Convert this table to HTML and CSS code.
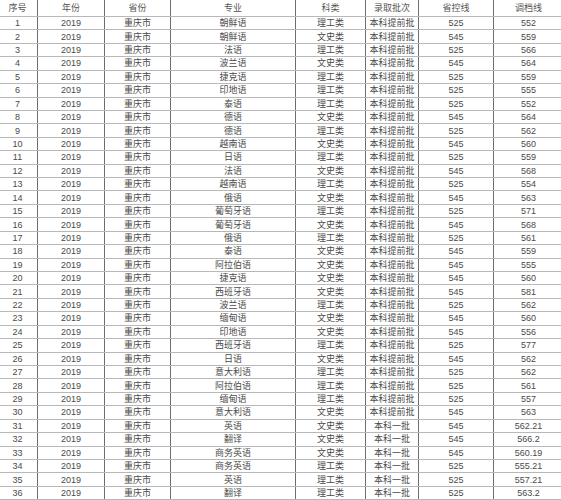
FILE: index.html
```html
<!DOCTYPE html>
<html lang="zh">
<head>
<meta charset="utf-8">
<link rel="stylesheet" href="styles.css">
</head>
<body>
<div class="frame">
<table class="grid">
<colgroup>
<col class="c1"><col class="c2"><col class="c3"><col class="c4"><col class="c5"><col class="c6"><col class="c7"><col class="c8">
</colgroup>
<thead>
<tr class="head"><th>序号</th><th>年份</th><th>省份</th><th>专业</th><th>科类</th><th>录取批次</th><th>省控线</th><th>调档线</th></tr>
</thead>
<tbody>
<tr><td>1</td><td>2019</td><td>重庆市</td><td>朝鲜语</td><td>理工类</td><td>本科提前批</td><td>525</td><td>552</td></tr>
<tr><td>2</td><td>2019</td><td>重庆市</td><td>朝鲜语</td><td>文史类</td><td>本科提前批</td><td>545</td><td>559</td></tr>
<tr><td>3</td><td>2019</td><td>重庆市</td><td>法语</td><td>理工类</td><td>本科提前批</td><td>525</td><td>566</td></tr>
<tr><td>4</td><td>2019</td><td>重庆市</td><td>波兰语</td><td>文史类</td><td>本科提前批</td><td>545</td><td>564</td></tr>
<tr><td>5</td><td>2019</td><td>重庆市</td><td>捷克语</td><td>理工类</td><td>本科提前批</td><td>525</td><td>559</td></tr>
<tr><td>6</td><td>2019</td><td>重庆市</td><td>印地语</td><td>理工类</td><td>本科提前批</td><td>525</td><td>555</td></tr>
<tr><td>7</td><td>2019</td><td>重庆市</td><td>泰语</td><td>理工类</td><td>本科提前批</td><td>525</td><td>552</td></tr>
<tr><td>8</td><td>2019</td><td>重庆市</td><td>德语</td><td>文史类</td><td>本科提前批</td><td>545</td><td>564</td></tr>
<tr><td>9</td><td>2019</td><td>重庆市</td><td>德语</td><td>理工类</td><td>本科提前批</td><td>525</td><td>562</td></tr>
<tr><td>10</td><td>2019</td><td>重庆市</td><td>越南语</td><td>文史类</td><td>本科提前批</td><td>545</td><td>560</td></tr>
<tr><td>11</td><td>2019</td><td>重庆市</td><td>日语</td><td>理工类</td><td>本科提前批</td><td>525</td><td>559</td></tr>
<tr><td>12</td><td>2019</td><td>重庆市</td><td>法语</td><td>文史类</td><td>本科提前批</td><td>545</td><td>568</td></tr>
<tr><td>13</td><td>2019</td><td>重庆市</td><td>越南语</td><td>理工类</td><td>本科提前批</td><td>525</td><td>554</td></tr>
<tr><td>14</td><td>2019</td><td>重庆市</td><td>俄语</td><td>文史类</td><td>本科提前批</td><td>545</td><td>563</td></tr>
<tr><td>15</td><td>2019</td><td>重庆市</td><td>葡萄牙语</td><td>理工类</td><td>本科提前批</td><td>525</td><td>571</td></tr>
<tr><td>16</td><td>2019</td><td>重庆市</td><td>葡萄牙语</td><td>文史类</td><td>本科提前批</td><td>545</td><td>568</td></tr>
<tr><td>17</td><td>2019</td><td>重庆市</td><td>俄语</td><td>理工类</td><td>本科提前批</td><td>525</td><td>561</td></tr>
<tr><td>18</td><td>2019</td><td>重庆市</td><td>泰语</td><td>文史类</td><td>本科提前批</td><td>545</td><td>559</td></tr>
<tr><td>19</td><td>2019</td><td>重庆市</td><td>阿拉伯语</td><td>文史类</td><td>本科提前批</td><td>545</td><td>555</td></tr>
<tr><td>20</td><td>2019</td><td>重庆市</td><td>捷克语</td><td>文史类</td><td>本科提前批</td><td>545</td><td>560</td></tr>
<tr><td>21</td><td>2019</td><td>重庆市</td><td>西班牙语</td><td>文史类</td><td>本科提前批</td><td>545</td><td>581</td></tr>
<tr><td>22</td><td>2019</td><td>重庆市</td><td>波兰语</td><td>理工类</td><td>本科提前批</td><td>525</td><td>562</td></tr>
<tr><td>23</td><td>2019</td><td>重庆市</td><td>缅甸语</td><td>文史类</td><td>本科提前批</td><td>545</td><td>560</td></tr>
<tr><td>24</td><td>2019</td><td>重庆市</td><td>印地语</td><td>文史类</td><td>本科提前批</td><td>545</td><td>556</td></tr>
<tr><td>25</td><td>2019</td><td>重庆市</td><td>西班牙语</td><td>理工类</td><td>本科提前批</td><td>525</td><td>577</td></tr>
<tr><td>26</td><td>2019</td><td>重庆市</td><td>日语</td><td>文史类</td><td>本科提前批</td><td>545</td><td>562</td></tr>
<tr><td>27</td><td>2019</td><td>重庆市</td><td>意大利语</td><td>理工类</td><td>本科提前批</td><td>525</td><td>562</td></tr>
<tr><td>28</td><td>2019</td><td>重庆市</td><td>阿拉伯语</td><td>理工类</td><td>本科提前批</td><td>525</td><td>561</td></tr>
<tr><td>29</td><td>2019</td><td>重庆市</td><td>缅甸语</td><td>理工类</td><td>本科提前批</td><td>525</td><td>557</td></tr>
<tr><td>30</td><td>2019</td><td>重庆市</td><td>意大利语</td><td>文史类</td><td>本科提前批</td><td>545</td><td>563</td></tr>
<tr><td>31</td><td>2019</td><td>重庆市</td><td>英语</td><td>文史类</td><td>本科一批</td><td>545</td><td>562.21</td></tr>
<tr><td>32</td><td>2019</td><td>重庆市</td><td>翻译</td><td>文史类</td><td>本科一批</td><td>545</td><td>566.2</td></tr>
<tr><td>33</td><td>2019</td><td>重庆市</td><td>商务英语</td><td>文史类</td><td>本科一批</td><td>545</td><td>560.19</td></tr>
<tr><td>34</td><td>2019</td><td>重庆市</td><td>商务英语</td><td>理工类</td><td>本科一批</td><td>525</td><td>555.21</td></tr>
<tr><td>35</td><td>2019</td><td>重庆市</td><td>英语</td><td>理工类</td><td>本科一批</td><td>525</td><td>557.21</td></tr>
<tr><td>36</td><td>2019</td><td>重庆市</td><td>翻译</td><td>理工类</td><td>本科一批</td><td>525</td><td>563.2</td></tr>
<tr><td></td><td></td><td></td><td></td><td></td><td></td><td></td><td></td></tr>
</tbody>
</table>
</div>
</body>
</html>
```

FILE: styles.css
```css
html, body {
  margin: 0;
  padding: 0;
  background: #ffffff;
}

.frame {
  width: 561px;
  height: 500px;
  overflow: hidden;
}

.grid {
  margin-left: -3px;
  margin-top: -1px;
  width: 566px;
  table-layout: fixed;
  border-collapse: collapse;
  font-family: "Liberation Sans", "Noto Sans CJK SC", sans-serif;
  font-size: 9px;
  color: #4a4a4a;
}

.c1 { width: 40px; }
.c2 { width: 67px; }
.c3 { width: 66px; }
.c4 { width: 125px; }
.c5 { width: 70px; }
.c6 { width: 53px; }
.c7 { width: 75px; }
.c8 { width: 70px; }

.grid th,
.grid td {
  padding: 0;
  text-align: center;
  vertical-align: middle;
  line-height: 10px;
  white-space: nowrap;
  overflow: hidden;
  border-left: 1px solid #6e6e6e;
  border-right: 1px solid #6e6e6e;
  border-top: 1px solid #b8b8b8;
  border-bottom: 1px solid #b8b8b8;
}

.grid th {
  font-weight: normal;
  color: #555555;
}

.head {
  height: 17px;
}

.grid tbody tr {
  height: 13.43px;
}
```
